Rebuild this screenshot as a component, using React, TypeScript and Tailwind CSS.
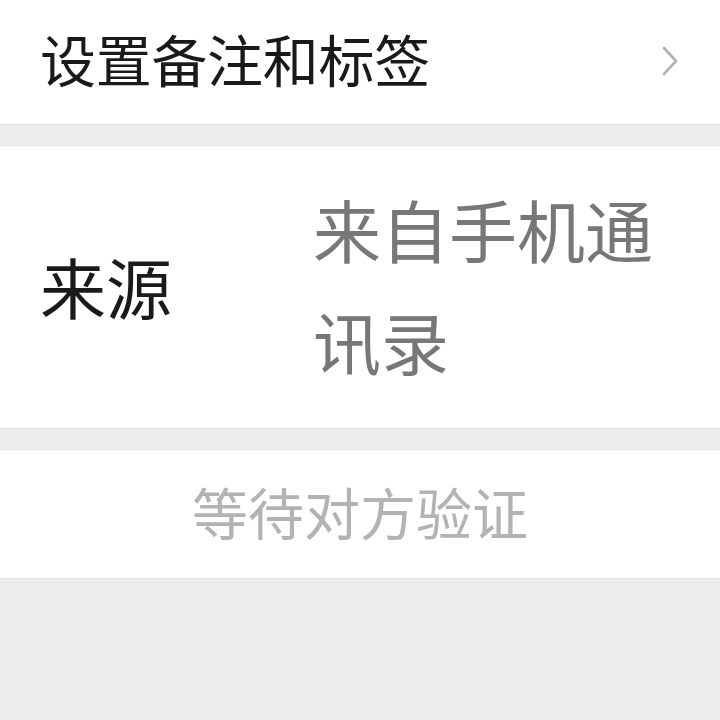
export default function App() {
  return (
    <div
      className="w-[720px] h-[720px] bg-[#ededed] overflow-hidden"
      style={{ fontFamily: '"Noto Sans CJK SC", "Noto Sans", sans-serif' }}
    >
      <div className="h-[125px] bg-white border-b border-[#e2e2e2] flex items-center justify-between pl-[40px] pr-[40px] pb-[8px]">
        <span className="text-[56px] leading-none text-[#1a1a1a] tracking-[-0.3px]">设置备注和标签</span>
        <svg width="20" height="30" viewBox="0 0 20 30" fill="none" className="mt-[6px]">
          <path d="M4 2 L16 15 L4 28" stroke="#b3b3b3" strokeWidth="2.6" strokeLinecap="round" strokeLinejoin="round" />
        </svg>
      </div>

      <div className="h-[20px]" />

      <div className="h-[284px] bg-white border-t border-b border-[#e2e2e2] flex items-center pl-[40px] pr-[40px] pb-[4px]">
        <span className="w-[273px] shrink-0 text-[66px] leading-none text-[#1a1a1a]">来源</span>
        <span className="w-[367px] text-[68px] leading-[112px] text-[#777777]">来自手机通讯录</span>
      </div>

      <div className="h-[20px]" />

      <div className="h-[130px] bg-white border-t border-b border-[#e2e2e2] flex items-center justify-center pb-[6px]">
        <span className="text-[56px] leading-none text-[#b3b3b3]">等待对方验证</span>
      </div>
    </div>
  )
}
